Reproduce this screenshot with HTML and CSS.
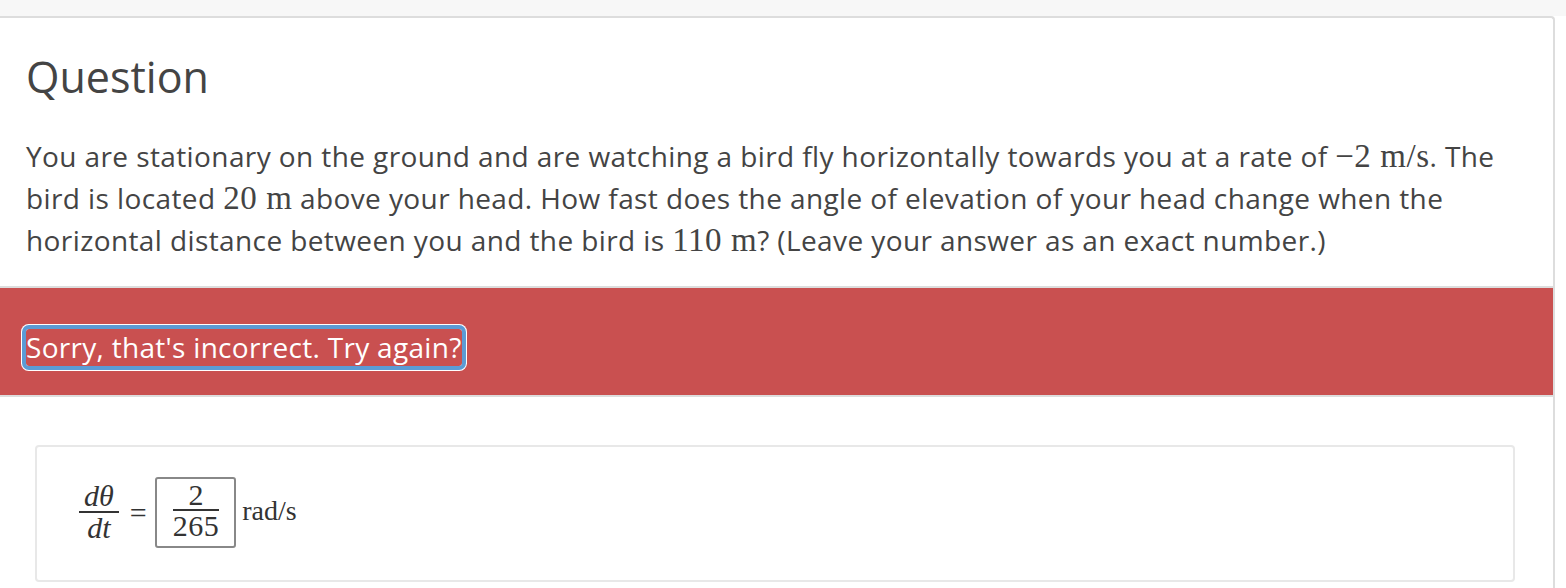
FILE: index.html
```html
<!DOCTYPE html>
<html lang="en">
<head>
  <meta charset="UTF-8">
  <title>Question</title>
  <link rel="stylesheet" href="styles.css">
</head>
<body>

  <div class="topbar"></div>

  <div class="panel">
    <div class="question">
      <h1>Question</h1>
      <p>
        You are stationary on the ground and are watching a bird fly horizontally towards you at a rate of
        <span class="m">&minus;2<span class="u">m/s</span></span>. The bird is located <span class="m">20<span class="u">m</span></span>
        above your head. How fast does the angle of elevation of your head change when the horizontal
        distance between you and the bird is <span class="m">110<span class="u">m</span></span>? (Leave your answer as an exact number.)
      </p>
    </div>

    <div class="feedback">
      <span class="feedback-text" tabindex="0">Sorry, that's incorrect. Try again?</span>
    </div>

    <div class="answer">
      <div class="answer-card">
        <div class="math-row">
          <span class="frac">
            <span class="num"><i>d&theta;</i></span>
            <span class="den"><i>dt</i></span>
          </span>
          <span class="eq">=</span>
          <span class="answer-box">
            <span class="frac small">
              <span class="num">2</span>
              <span class="den">265</span>
            </span>
          </span>
          <span class="unit">rad/s</span>
        </div>
      </div>
    </div>
  </div>

</body>
</html>
```

FILE: styles.css
```css
body {
  margin: 0;
  background: #fff;
  font-family: 'Open Sans', 'Noto Sans', sans-serif;
  color: #444;
}

.topbar {
  height: 16px;
  background: #f7f7f7;
}

.panel {
  margin-right: 11px;
  border-top: 2px solid #ddd;
  border-right: 2px solid #ddd;
  border-top-right-radius: 4px;
  background: #fff;
}

.question {
  padding: 36px 26px 25px;
}

.question h1 {
  margin: 0;
  font-size: 43px;
  font-weight: 400;
  line-height: 46px;
  color: #444;
}

.question p {
  margin: 35px 0 0;
  font-size: 28px;
  letter-spacing: 0.4px;
  line-height: 42px;
}

.m {
  font-family: 'Liberation Serif', 'DejaVu Serif', serif;
  font-size: 33px;
  letter-spacing: 0.5px;
}

.m .u {
  margin-left: 9px;
}

.feedback {
  border-top: 2px solid #ddd;
  border-bottom: 2px solid #ddd;
  background: #c95050;
  padding: 41px 0 29px 26px;
}

.feedback-text {
  display: inline-block;
  color: #fff;
  font-size: 28px;
  letter-spacing: 0.3px;
  line-height: 37px;
  border-radius: 3px;
  box-shadow: 0 0 0 4px #5b9bd5, 0 0 0 5px #fff;
  outline: none;
}

.answer {
  padding: 48px 38px 40px 35px;
}

.answer-card {
  border: 2px solid #e8e8e8;
  border-radius: 4px;
  padding: 30px 40px 32px;
  min-height: 70px;
}

.math-row {
  display: flex;
  align-items: center;
  font-family: 'Liberation Serif', 'DejaVu Serif', serif;
  font-size: 30px;
  color: #333;
}

.frac {
  display: inline-flex;
  flex-direction: column;
  align-items: center;
  padding: 0 2px;
}

.frac .num {
  border-bottom: 2px solid #333;
  padding: 0 5px 1px;
  line-height: 28px;
  align-self: stretch;
  text-align: center;
}

.frac .den {
  line-height: 30px;
}

.eq {
  margin: 0 8px 0 9px;
}

.answer-box {
  display: inline-flex;
  border: 2px solid #888;
  border-radius: 3px;
  padding: 3px 13px 5px 14px;
}

.frac.small .num {
  line-height: 26px;
  padding: 0 3px 1px;
}

.frac.small .den {
  letter-spacing: 0.5px;
}

.unit {
  margin-left: 6px;
  padding-bottom: 4px;
  font-size: 28px;
}
```
